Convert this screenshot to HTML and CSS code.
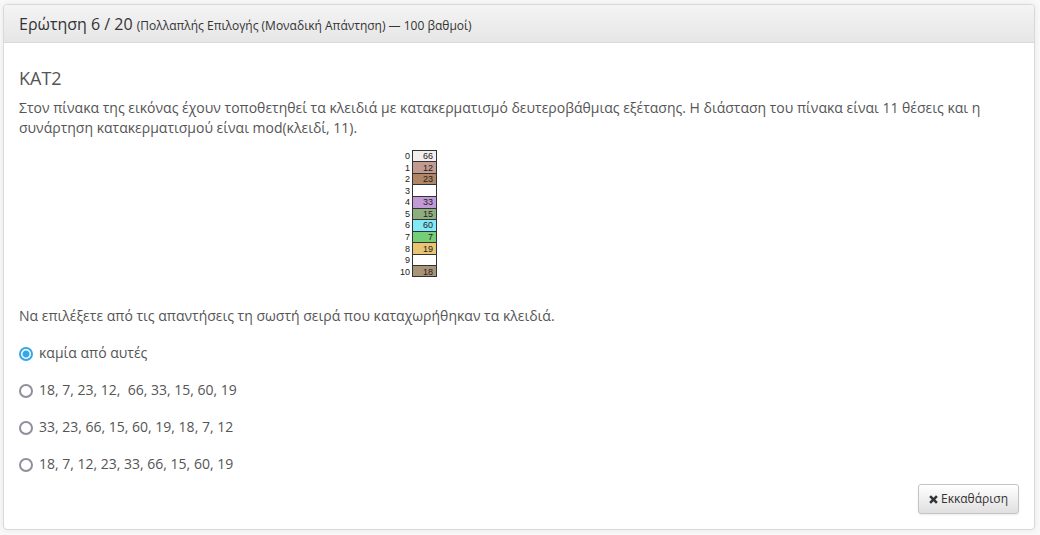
FILE: index.html
```html
<!DOCTYPE html>
<html lang="el">
<head>
<meta charset="utf-8">
<title>Ερώτηση 6 / 20</title>
<link rel="stylesheet" href="styles.css">
</head>
<body>
<main class="card">
  <header class="card-header">
    <h1 class="title">Ερώτηση 6 / 20 <small class="subtitle">(Πολλαπλής Επιλογής (Μοναδική Απάντηση) — 100 βαθμοί)</small></h1>
  </header>
  <form class="card-body">
    <h2 class="heading">ΚΑΤ2</h2>
    <p class="text">Στον πίνακα της εικόνας έχουν τοποθετηθεί τα κλειδιά με κατακερματισμό δευτεροβάθμιας εξέτασης. Η διάσταση του πίνακα είναι 11 θέσεις και η συνάρτηση κατακερματισμού είναι mod(κλειδί, 11).</p>
    <div class="figure">
      <svg class="diagram" width="40" height="130" viewBox="0 0 40 130" role="img" aria-label="Πίνακας κατακερματισμού">
        <g stroke="#333" stroke-width="1">
          <rect x="12.500" y="1.500" width="24" height="11" fill="#f3eeee"/>
          <rect x="12.500" y="12.500" width="24" height="12" fill="#c39a8f"/>
          <rect x="12.500" y="24.500" width="24" height="11" fill="#b08565"/>
          <rect x="12.500" y="35.500" width="24" height="12" fill="#fff"/>
          <rect x="12.500" y="47.500" width="24" height="12" fill="#c39ad8"/>
          <rect x="12.500" y="59.500" width="24" height="11" fill="#8fae80"/>
          <rect x="12.500" y="70.500" width="24" height="12" fill="#83e9f6"/>
          <rect x="12.500" y="82.500" width="24" height="11" fill="#76ce78"/>
          <rect x="12.500" y="93.500" width="24" height="12" fill="#e8c473"/>
          <rect x="12.500" y="105.500" width="24" height="11" fill="#fff"/>
          <rect x="12.500" y="116.500" width="24" height="11" fill="#a99479"/>
        </g>
        <g class="index">
          <text x="10" y="10">0</text><text x="10" y="22">1</text><text x="10" y="33">2</text>
          <text x="10" y="45">3</text><text x="10" y="56">4</text><text x="10" y="68">5</text>
          <text x="10" y="79">6</text><text x="10" y="91">7</text><text x="10" y="103">8</text>
          <text x="10" y="114">9</text><text x="10" y="126">10</text>
        </g>
        <g class="index">
          <text x="33" y="10">66</text><text x="33" y="22">12</text><text x="33" y="33">23</text>
          <text x="33" y="56">33</text><text x="33" y="68">15</text><text x="33" y="79">60</text>
          <text x="33" y="91">7</text><text x="33" y="103">19</text><text x="33" y="126">18</text>
        </g>
      </svg>
    </div>
    <p class="text">Να επιλέξετε από τις απαντήσεις τη σωστή σειρά που καταχωρήθηκαν τα κλειδιά.</p>
    <div class="options">
      <label class="option"><input class="radio" type="radio" name="answer" checked><span>καμία από αυτές</span></label>
      <label class="option"><input class="radio" type="radio" name="answer"><span>18, 7, 23, 12,&nbsp; 66, 33, 15, 60, 19</span></label>
      <label class="option"><input class="radio" type="radio" name="answer"><span>33, 23, 66, 15, 60, 19, 18, 7, 12</span></label>
      <label class="option"><input class="radio" type="radio" name="answer"><span>18, 7, 12, 23, 33, 66, 15, 60, 19</span></label>
    </div>
    <div class="actions">
      <button class="clear" type="reset"><svg class="cross" width="9" height="9" viewBox="0 0 9 9" aria-hidden="true"><path d="M2 0.300 4.500 2.700 7 0.300 8.800 2.100 6.300 4.500 8.800 6.900 7 8.700 4.500 6.300 2 8.700 0.200 6.900 2.700 4.500 0.200 2.100Z" fill="#333"/></svg>Εκκαθάριση</button>
    </div>
  </form>
</main>
</body>
</html>
```
FILE: styles.css
```css
* { box-sizing: border-box; }
body {
  margin: 0;
  padding: 4px 5px 5px 3px;
  background: #f9f9f9;
  color: #555;
  font: 14px/20px "Open Sans", "Noto Sans", sans-serif;
}
.card {
  background: #fff;
  border: 1px solid #d9d9d9;
  border-radius: 4px;
  box-shadow: 0 0 6px rgba(0, 0, 0, 0.08);
}
.card-header {
  padding: 9px 15px 8px;
  border-bottom: 1px solid #d9d9d9;
  border-radius: 4px 4px 0 0;
  background: linear-gradient(#f4f4f4, #e6e6e6);
}
.title {
  margin: 0;
  color: #333;
  font-size: 16px;
  font-weight: 400;
  line-height: 20px;
}
.subtitle { font-size: 12px; line-height: 1; }
.card-body { padding: 25px 15px 15px; }
.heading {
  margin: 0 0 10px;
  font-size: 18px;
  font-weight: 400;
  line-height: 20px;
}
.text { margin: 0; }
.figure { padding: 11px 20% 0 38%; margin-bottom: 27px; }
.diagram { display: block; margin-left: 1px; }
.index {
  font: 9px "Liberation Sans", Arial, sans-serif;
  fill: #222;
  text-anchor: end;
}
.options {
  display: flex;
  flex-direction: column;
  align-items: flex-start;
  gap: 17px;
  margin-top: 17px;
}
.option { display: flex; align-items: center; gap: 6px; }
.radio {
  appearance: none;
  width: 14px;
  height: 14px;
  margin: 2px 0 0;
  border: 2px solid #8f8f9d;
  border-radius: 50%;
  background: #fff;
}
.radio:checked {
  border-color: #35a6e6;
  background: radial-gradient(circle, #35a6e6 3px, #fff 4px);
}
.actions { display: flex; justify-content: flex-end; margin-top: 10px; }
.clear {
  display: flex;
  align-items: center;
  gap: 3px;
  padding: 4px 10px;
  border: 1px solid #c4c4c4;
  border-radius: 3px;
  background: linear-gradient(#fff, #e0e0e0);
  box-shadow: 0 1px 2px rgba(0, 0, 0, 0.08);
  color: #333;
  font: 12px/20px "Open Sans", "Noto Sans", sans-serif;
}
```
